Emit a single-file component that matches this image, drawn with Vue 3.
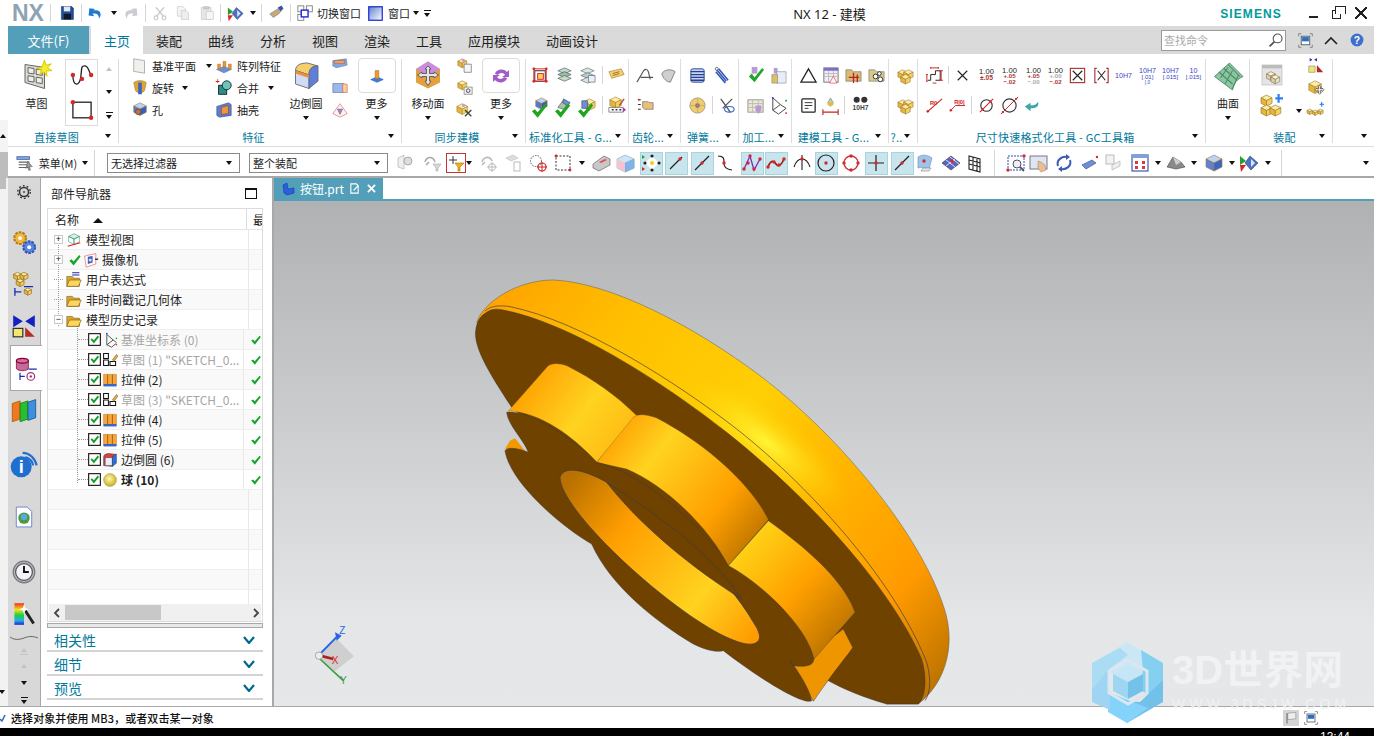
<script setup>
import { h } from 'vue'

const dot = (x, y, r = 1.7, c = '#d9262c') => `<circle cx="${x}" cy="${y}" r="${r}" fill="${c}"/>`
const ln = (d, c = '#222', w = 1) => `<path d="${d}" stroke="${c}" stroke-width="${w}" fill="none"/>`
const fl = (d, c, s = 'none') => `<path d="${d}" fill="${c}" stroke="${s}" stroke-width=".6"/>`
const tx = (x, y, t, c = '#333', s = 6, b = 'normal') => `<text x="${x}" y="${y}" fill="${c}" font-size="${s}" font-weight="${b}" text-anchor="middle" font-family="Liberation Sans, sans-serif">${t}</text>`
const cube = (x, y, s, t, l, r) =>
  fl(`M${x} ${y}l${s} ${s / 2}l${-s} ${s / 2}l${-s} ${-s / 2}z`, t, '#9a7a30') +
  fl(`M${x - s} ${y + s / 2}l${s} ${s / 2}v${s}l${-s} ${-s / 2}z`, l, '#9a7a30') +
  fl(`M${x + s} ${y + s / 2}l${-s} ${s / 2}v${s}l${s} ${-s / 2}z`, r, '#9a7a30')
const yc = (x, y, s) => cube(x, y, s, '#fdeba6', '#e8b43c', '#f6d05f')
const bc = (x, y, s) => cube(x, y, s, '#bcd3f5', '#4f78d8', '#3a5cc0')
const gc = (x, y, s) => cube(x, y, s, '#f2f2f2', '#cfcfcf', '#e0e0e0')
const check = (x = 0, y = 0, c = '#1fa51f') => `<path transform="translate(${x} ${y})" d="M2 11l3-2 3 3 8-9 2 2-10 13z" fill="${c}"/>`
const folder = fl('M2 6h6l2 2h6v9H2z', '#d9a62b', '#6b4a10') + fl('M2 17l3-7h13l-3 7z', '#ffd65c', '#6b4a10')

const icons = {
  save: fl('M3 2h13l2 2v14H3z', '#1d4f9e', '#123') + fl('M6 2h8v6H6z', '#dfe8f5') + fl('M6 11h9v7H6z', '#101828'),
  undo: fl('M3 4l7 1-2 2c4-1 9 0 9 5 0 2-1 4-2 5 0-5-3-7-8-6l2 3-7-1z', '#1f78d1'),
  redo: `<g transform="matrix(-1 0 0 1 20 0)">` + fl('M3 4l7 1-2 2c4-1 9 0 9 5 0 2-1 4-2 5 0-5-3-7-8-6l2 3-7-1z', '#c9ccd0') + `</g>`,
  cut: ln('M6 14L15 3M14 14L5 3', '#c4c6c8', 1.6) + `<circle cx="5" cy="16" r="2.4" fill="none" stroke="#c4c6c8" stroke-width="1.4"/><circle cx="15" cy="16" r="2.4" fill="none" stroke="#c4c6c8" stroke-width="1.4"/>`,
  copy: fl('M3 2h7l3 3v9H3z', '#f4f4f4', '#b8b8b8') + fl('M8 7h6l3 3v8H8z', '#eee', '#b8b8b8'),
  paste: fl('M3 3h12v15H3z', '#e6e6e6', '#b8b8b8') + fl('M6 2h6v3H6z', '#d0d0d0', '#aaa') + fl('M9 8h9v10H9z', '#f6f6f6', '#b8b8b8'),
  view: fl('M1 3l6 5-6 4z', '#25a02b') + fl('M1 12l6 0-5 7z', '#d8262c') + fl('M11 3l8 7-7 7-6-7z', '#4a70c8', '#345') + fl('M12 6l4 4-4 4z', '#dce6f7'),
  brush: fl('M3 11l8-5 5-4 2 3-5 6-6 4z', '#c8a878', '#777') + fl('M12 4l4-2 2 3-3 3z', '#2f55b5'),
  swin: `<rect x="1" y="1" width="7" height="7" fill="#fff" stroke="#777"/><rect x="11" y="1" width="7" height="7" fill="#fff" stroke="#777"/><rect x="1" y="11" width="7" height="7" fill="#fff" stroke="#777"/><rect x="5" y="6" width="8" height="8" fill="#fff" stroke="#1a22d8" stroke-width="1.6"/>`,
  win: `<defs><linearGradient id="wg" x1="0" y1="0" x2="1" y2="1"><stop offset="0" stop-color="#5b85c8"/><stop offset="1" stop-color="#fff"/></linearGradient></defs><rect x="1" y="1" width="18" height="18" fill="url(#wg)" stroke="#1a22d8" stroke-width="1.6"/>`,
  lens: `<circle cx="12" cy="8" r="5.5" fill="#fff" stroke="#555" stroke-width="1.4"/>` + ln('M8 12l-6 6', '#555', 2.4),
  fullscr: ln('M2 5V2h3M15 2h3v3M18 15v3h-3M5 18H2v-3', '#777') + `<rect x="5" y="5" width="10" height="10" fill="#fff" stroke="#456"/><rect x="6" y="6" width="8" height="5" fill="#2f6fc0"/>`,
  help: `<circle cx="10" cy="10" r="8" fill="#3c6fd0"/>` + tx(10, 14.5, '?', '#fff', 13, 'bold'),
  sketch: fl('M2 3l13 2v14L2 15z', '#dcdcd4', '#555') + fl('M4 5l4 .7v3.6l-4-.6zM9.5 6l4 .6v3.6l-4-.6zM4 10.5l4 .6v3.6l-4-.6zM9.5 11.5l4 .6v3.6l-4-.6z', '#efefe8', '#555') + fl('M15 0l1 3.5 3.5-1-2.5 2.8 3 1.8-3.6.2.2 3.6-2-3-3 2 1.5-3.4-3.5-1 3.6-.6z', '#f5ec2a', '#d6c400'),
  curve: ln('M3 10c0 9 5 9 6 2s0-9 3-9 3 4 5 7', '#222', 1) + dot(3, 10) + dot(10, 13) + dot(17, 10),
  rect: `<rect x="3" y="4" width="14" height="12" fill="none" stroke="#222"/>` + dot(3, 4) + dot(17, 16),
  plane: fl('M3 2l12 2v14L3 16z', '#eff2ec', '#777'),
  revolve: fl('M3 4c4-3 10-3 14 0l-2 9c-2 3-8 3-10 0z', '#e5a22c', '#785') + fl('M8 4h4v13H8z', '#3b64c8'),
  hole: bc(10, 2, 7) + `<circle cx="8" cy="12" r="3" fill="#d96a30" stroke="#555"/>`,
  pattern: fl('M1 14l9-4 9 4-9 4z', '#6f8ed0') + fl('M3 8h3v5H3zM9 5h3v6H9zM15 8h3v5h-3z', '#f09a2a', '#a5621a'),
  unite: `<rect x="4" y="7" width="9" height="10" fill="#2e8f80" stroke="#123"/><circle cx="13" cy="7" r="5" fill="#6fc4b8" stroke="#123"/>` + tx(3, 6, '+', '#d22', 8, 'bold'),
  shell: fl('M2 6l13-4 3 2v12l-13 2-3-2z', '#5e7fd0', '#345') + fl('M7 7l8-2v9l-8 1z', '#f0953a', '#734'),
  blend: fl('M3 7c0-4 4-5 8-5l7 2c-4 0-6 2-6 6z', '#f4cf6a', '#667') + fl('M3 7l9 3v9l-9-3z', '#cfdcf4', '#667') + fl('M12 10c0-4 2-6 6-6v10l-6 5z', '#5f7fd8', '#667') + fl('M3 7l9 3v2L3 9z', '#ee8d3a'),
  bl1: fl('M2 4l15-2 1 7-12 3-4-2z', '#7fa5e8', '#678') + fl('M4 4h11v3H4z', '#f2a75a', '#b53'),
  bl2: fl('M2 5h12v10H2z', '#9ab8ec', '#567') + fl('M13 5l5 1v9h-5z', '#f7d09a', '#b53') ,
  bl3: fl('M10 3l8 11-8 4-8-4z', '#f5f5f5', '#d44') + fl('M7 9h6l-3 6z', '#6f98e8', '#d44'),
  more1: fl('M3 14l7-3 7 3-7 3z', '#3a7ce0', '#25a') + fl('M8 4h4v9H8z', '#f09a2a', '#a5621a'),
  move: fl('M10 1l8 5v9l-8 4-8-4V6z', '#e5a03c') + fl('M10 1l8 5-8 5-8-5z', '#c98de0') + fl('M10 4l2 2h-1v3h3v-1l3 2-3 2v-1h-3v3h1l-2 3-2-3h1v-3H6v1l-3-2 3-2v1h3V6H8z', '#e6e6e6', '#555'),
  syn1: yc(7, 2, 5) + fl('M9 8h8v9H9z', '#f6f6f6', '#444') + fl('M7 2l4 2-4 2z', '#c98de0'),
  syn2: yc(7, 2, 5) + fl('M9 9h9v8H9z', '#f0f0f0', '#555') + `<circle cx="13.5" cy="13" r="2" fill="none" stroke="#444"/>`,
  syn3: yc(7, 3, 6) + ln('M10 10l7 7M17 10l-7 7', '#444', 1.6) + fl('M7 3l5 2-5 2z', '#c98de0'),
  sync: fl('M4 8c1-5 9-6 12-2l2-2v7h-7l3-2c-2-3-6-2-7 0z', '#a15cc8') + fl('M16 12c-1 5-9 6-12 2l-2 2V9h7l-3 2c2 3 6 2 7 0z', '#a15cc8'),
  s1: `<rect x="4" y="5" width="11" height="11" fill="none" stroke="#222"/><rect x="7" y="8" width="6" height="6" fill="#fbd060" stroke="#d22"/>` + `<rect x="3" y="3" width="13" height="13" fill="none" stroke="#d22"/>` + dot(3, 3, 1.5) + dot(16, 3, 1.5) + dot(3, 16, 1.5) + dot(16, 16, 1.5),
  s2: fl('M3 5l7-3 7 3-7 3z', '#c9d8c9', '#345') + fl('M3 9l7-3 7 3-7 3z', '#9cc09c', '#345') + fl('M3 13l7-3 7 3-7 3z', '#c9d8c9', '#345'),
  s3: fl('M3 5l7-3 7 3-7 3z', '#dde6dd', '#456') + fl('M3 10l7-3 7 3-7 3z', '#b9ccc0', '#456') + fl('M3 15l7-3 7 3-7 3z', '#dde6dd', '#456') + fl('M11 10h7v7h-7z', '#e8eef8', '#456'),
  s4: fl('M2 6l13-3 3 6-13 4z', '#f4cf70', '#a07020') + ln('M6 8l7-2M6 10l7-2', '#a07020'),
  s5: bc(11, 2, 6) + check(-1, 5),
  s6: fl('M3 12l6-8 5 3-5 7z', '#a8c4a4', '#345') + fl('M9 3l7 4-3 3-5-3z', '#6f8ed8', '#345') + check(-2, 5),
  s7: yc(12, 3, 6) + fl('M4 5h6v8H4z', '#6f8ed8', '#345') + check(-2, 5),
  s8: yc(9, 1, 6) + fl('M2 12h15v5H2z', '#fff', '#333') + ln('M5 14.5h2M9 14.5h2M13 14.5h2', '#333', 1.6) + fl('M17 12l3 2.5-3 2.5z', '#a030c0') + ln('M13 10l5-7', '#b53', 1.6),
  g1: ln('M1 17L8 5c2-2 4-2 5 1l2 8M5 12h13', '#555', 1.2),
  g2: fl('M3 8c3-5 10-5 14-2l-5 11c-4 0-8-4-9-9z', '#cfcfcf', '#444'),
  g3: ln('M2 4h3M2 9h3M2 14h3', '#333', 1.2) + fl('M7 6h6l1 1h4v7h-9l-2-2z', '#e8c07a', '#555') + dot(3, 4, 1),
  sp1: `<rect x="3" y="3" width="14" height="14" rx="2" fill="#cbd7ee" stroke="#26409a"/>` + ln('M3 6h14M3 9h14M3 12h14M3 15h14', '#26409a', 1.4),
  sp2: ln('M5 4l10 12M7 3l10 12M4 6l10 12', '#2f55b5', 1.6) + `<circle cx="5" cy="3" r="1.6" fill="none" stroke="#777"/>`,
  sp3: `<ellipse cx="10" cy="10" rx="8" ry="8" fill="#f1cc6a" stroke="#a97"/><circle cx="10" cy="10" r="2.5" fill="#777"/>` + ln('M10 3v14M3 10h14', '#a97', .6),
  sp4: ln('M4 3l10 14M16 3L6 13', '#555', 1.4) + `<ellipse cx="13" cy="14" rx="5" ry="3" fill="none" stroke="#3b64c8" stroke-width="1.2"/>`,
  m1: fl('M6 1h6v7H6z', '#b59ad4') + fl('M3 11l3-3 3 4 8-10 2 2-10 13z', '#21a62b'),
  m2: fl('M5 2h4v6H5z', '#b59ad4') + fl('M8 6h10v12H8z', '#e8eef8', '#789') + fl('M3 9h6v9H3z', '#e0c05a', '#789'),
  m3: `<rect x="2" y="4" width="16" height="13" fill="#eee8d0" stroke="#999"/>` + ln('M2 8h16M2 12h16M7 4v13M13 4v13', '#bbb') + fl('M10 10h6v5l-3 4-3-4z', '#b59ad4'),
  m4: ln('M4 2v13l6 4 8-6M4 15l8-6 6 4M4 2l8 7', '#444') + dot(4, 2, 1, '#2040c0') + dot(18, 5, 1, '#20a020') + dot(18, 18, 1, '#d22'),
  t1: ln('M10 3l8 14H2z', '#222', 1.3),
  t2: `<rect x="3" y="2" width="15" height="15" fill="#f2eef8" stroke="#777"/><rect x="3" y="2" width="15" height="3" fill="#7d6fc8"/>` + ln('M3 8h15M3 11h15M8 5v12M13 5v12', '#bbb') + fl('M13 11l4 7H9z', '#fff', '#d22'),
  t3: fl('M2 4h6l2 2h8v10H2z', '#d8bc74', '#666') + ln('M10 7v11M5 12h11M14 9v8', '#b22', 1.4),
  t4: fl('M2 4h6l2 2h8v10H2z', '#d8c88a', '#666') + `<circle cx="9" cy="11" r="2.5" fill="#fff" stroke="#333"/><circle cx="14" cy="14" r="2.5" fill="#fff" stroke="#333"/><circle cx="13" cy="8" r="2" fill="#fff" stroke="#333"/>`,
  t5: `<rect x="3" y="3" width="14" height="14" rx="1" fill="#fff" stroke="#222" stroke-width="1.3"/>` + ln('M6 7h8M6 10h8M6 13h4', '#333'),
  t6: fl('M10 2l3 5-3 4-3-4z', '#c8c8a0', '#777') + fl('M7 7h6v3H7z', '#e8b83c') + ln('M2 17h16M2 14v6M18 14v6', '#c22', 1.2),
  t7: `<circle cx="6" cy="4" r="3.2" fill="#333"/><circle cx="14" cy="4" r="3.2" fill="#333"/>` + tx(10, 15, '10H7', '#444', 7, 'bold'),
  as: yc(7, 4, 5) + yc(13, 4, 5) + yc(10, 9, 5),
  d1: ln('M3 15h3V9h5V5h5v10h-5', '#222') + ln('M2 9v7M1 9h2M1 16h2M17 5v10M15 5h4M15 15h4M6 2h8M6 1v2M14 1v2M8 18h4', '#c22', 1),
  dx: ln('M5 5l10 10M15 5L5 15', '#222', 1.2),
  d100: tx(10, 8, '1.00', '#222', 8) + tx(10, 15, '±.05', '#a33', 7, 'bold'),
  d101: tx(10, 7, '1.00', '#222', 8) + tx(10, 13, '+.05', '#a33', 6.5, 'bold') + tx(10, 19, '−.02', '#a33', 6.5, 'bold'),
  d102: tx(10, 7, '1.00', '#222', 8) + tx(10, 13, '+.05', '#a33', 6.5, 'bold') + tx(10, 19, '−.00', '#aaa', 6.5, 'bold'),
  d103: tx(10, 7, '1.00', '#222', 8) + tx(10, 13, '+.00', '#aaa', 6.5, 'bold') + tx(10, 19, '−.02', '#a33', 6.5, 'bold'),
  dbox: `<rect x="2.5" y="2.5" width="15" height="15" fill="#fff" stroke="#a33" stroke-width="1.2"/>` + ln('M5 5l10 10M15 5L5 15', '#222', 1.2),
  dpar: ln('M5 2.5H3v15h2M15 2.5h2v15h-2', '#a33', 1.2) + ln('M6 5l8 10M14 5L6 15', '#222', 1.1),
  h1: tx(10, 13, '10H7', '#3a44c8', 7.5),
  h2: tx(10, 7, '10H7', '#3a44c8', 7.5) + tx(10, 14, '[.01]', '#3a44c8', 6.5) + tx(10, 19, '[.0', '#3a44c8', 5),
  h3: tx(10, 7, '10H7', '#3a44c8', 7.5) + tx(10, 14, '[.015]', '#3a44c8', 6.5),
  h4: tx(10, 7, '10', '#3a44c8', 7.5) + tx(10, 14, '[.015]', '#3a44c8', 6.5),
  r1: ln('M2 17L18 3', '#c22', 1.2) + tx(9, 9, 'R0', '#c22', 6, 'bold') + dot(3, 16, 1.3),
  r2: ln('M2 16l6-6h10', '#c22', 1) + tx(12, 8, 'R|0|', '#c22', 6, 'bold') + dot(3, 15, 1.3),
  r3: `<circle cx="10" cy="10" r="6" fill="none" stroke="#333" stroke-width="1.2"/>` + ln('M3 17L17 3', '#c22', 1.1) + dot(6, 14, 1.2) + dot(14, 6, 1.2),
  r4: `<circle cx="10" cy="10" r="7" fill="none" stroke="#333" stroke-width="1.2"/>` + ln('M1 19L19 1', '#c22', 1) + dot(3, 17, 1.2) + dot(17, 3, 1.2),
  r5: fl('M17 6c1 5-2 7-8 7v3l-6-5 6-4v3c4 0 6-1 8-4z', '#3fa6a8'),
  surf: fl('M1 11L11 2l9 9c-4 2-6 4-7 9z', '#8ac7a0', '#4c8a6a') + ln('M4 8l9 8M7 5.5l9 8M10 3l8 8M8 16l5-9M5 12l5-7M13 19l4-9', '#4c8a6a', .7),
  gasm: `<rect x="1" y="1" width="18" height="18" fill="#e4e4e4" stroke="#ccc"/><rect x="1" y="1" width="18" height="3" fill="#bbb"/>` + gc(9, 7, 4) + gc(13, 10, 4),
  amir: fl('M3 1l3 2-3 2zM11 1L8 3l3 2z', '#1a28b8') + fl('M2 10h7v7H2z', '#f1e66e', '#776') + fl('M11 17V9l7 8z', '#b62a2a'),
  amov: yc(9, 2, 7) + fl('M14 7l2 2h-1v2h2v-1l2 2-2 2v-1h-2v2h1l-2 2-2-2h1v-2h-2v1l-2-2 2-2v1h2V9h-1z', '#f4f4f4', '#222'),
  aadd: yc(5, 1, 5) + yc(5, 10, 5) + yc(13, 10, 5) + fl('M13 3h2V0h2v3h3v2h-3v3h-2V5h-2z', '#2f80f0'),
  achain: yc(3, 9, 3) + yc(9, 10, 3) + yc(15, 9, 3) + fl('M14 3h1.5V1h1.5v2h2v1.5h-2v2h-1.5v-2H14z', '#3d8bf0'),
  menu: `<rect x="1" y="3" width="14" height="3" fill="#8fa6d8" stroke="#4d6db0"/>` + ln('M3 9h12M3 12h12M3 15h12', '#666', 1.2) + fl('M13 8l5 6-3 0 1 4-2 0-1-4-2 2z', '#999', '#555'),
  f1: fl('M3 5l6-3v14l-6-2z', '#eee', '#aaa') + `<circle cx="13" cy="8" r="4" fill="#ddd" stroke="#aaa"/>`,
  f2: ln('M2 9c2-6 8-6 10 0M6 9l-3 3', '#aaa', 1.6) + fl('M10 11h8l-3 4v3h-2v-3z', '#d8d8d8', '#aaa'),
  f3: `<rect x="0.5" y="0.5" width="19" height="19" fill="#fff" stroke="#c33"/>` + ln('M3 7h8M7 3v8', '#333', 1) + fl('M9 10h9l-4 4v4h-2v-4z', '#f0b020', '#a70'),
  f4: ln('M3 9c2-6 8-6 10-1M6 9L3 12', '#bbb', 1.6) + `<circle cx="13" cy="14" r="3.5" fill="none" stroke="#bbb"/>` + ln('M13 9v10M8 14h10', '#bbb'),
  f5: fl('M3 5l7-3 5 3-7 3z', '#ddd', '#bbb') + `<rect x="11" y="9" width="6" height="9" fill="none" stroke="#bbb"/>`,
  f6: `<circle cx="8" cy="8" r="5.5" fill="none" stroke="#555" stroke-dasharray="1.5 1.2"/>` + `<circle cx="14" cy="14" r="4" fill="none" stroke="#c22" stroke-width="1.2"/>` + ln('M14 9v10M9 14h10', '#c22'),
  f7: `<rect x="3" y="3" width="14" height="14" fill="none" stroke="#333" stroke-dasharray="2 1.5"/>` + dot(3, 3, 1.4) + dot(17, 17, 1.4),
  f8: fl('M2 11L13 3l6 3v6L8 18 2 15z', '#c8c8c8', '#555') + fl('M8 9l6-3 2 1-6 3z', '#e05050'),
  f9: fl('M2 6l8-4 9 4v9l-9 4-8-4z', '#cfe3fa', '#7aa') + fl('M10 10l9-4v9l-9 4z', '#7fb3ee', '#7aa') + fl('M2 6l8 4v9l-8-4z', '#f4c4d0'),
  p1: fl('M3 10l7-7 7 7-7 7z', '#fff') + dot(10, 3, 1.6, '#222') + dot(10, 17, 1.6, '#222') + dot(3, 10, 1.6, '#222') + dot(17, 10, 1.6, '#222') + dot(10, 10, 2, '#f5d010') + fl('M0 2l3 2-3 2z', '#1fa51f') + fl('M0 14l3 2-3 2z', '#d22'),
  p2: ln('M4 16L16 4', '#222', 1.2) + dot(14, 6),
  p3: ln('M3 17L17 3', '#222', 1.2) + dot(10, 10),
  p4: ln('M3 3c6 0 6 3 6 6s0 7 8 8', '#222', 1.2) + dot(9, 10),
  p5: ln('M2 16L8 3l4 14 6-11', '#7a28c8', 1.3) + dot(2, 16) + dot(8, 3) + dot(12, 16) + dot(18, 6) + dot(6, 10),
  p6: ln('M2 14c3-8 6-6 8-3s5 2 8-5', '#a01818', 1.6) + dot(2, 14) + dot(8, 9) + dot(13, 12) + dot(18, 6),
  p7: ln('M2 14c2-6 5-8 8-8s6 2 8 8M10 2v15', '#222', 1.1) + dot(10, 6),
  p8: `<circle cx="10" cy="10" r="8" fill="none" stroke="#222" stroke-width="1.2"/>` + dot(10, 10),
  p9: `<circle cx="10" cy="10" r="7" fill="none" stroke="#c33" stroke-width="1.3"/>` + dot(10, 3) + dot(10, 17) + dot(3, 10) + dot(17, 10),
  p10: ln('M10 2v16M2 10h16', '#222', 1.2) + dot(10, 10),
  p11: ln('M3 17L17 3', '#222', 1.2) + dot(10, 10),
  p12: fl('M3 4c5-3 10-2 14 1l-3 11c-4-2-8-2-11-1z', '#9cc4ee', '#789') + dot(9, 8) + fl('M8 15h8l-2 3H6z', '#e6e6e6', '#789'),
  p13: fl('M1 10l9-7 9 7-9 7z', '#5866c0', '#334') + ln('M5 7l9 7M9 4l9 7M5 13l9-7', '#dde') + dot(11, 8),
  p14: ln('M4 3l11 3v13L4 16zM4 7l11 3M4 11l11 3M8 4v13M12 5v13', '#222', 1.1),
  v1: `<rect x="2" y="3" width="16" height="14" fill="none" stroke="#234ec0" stroke-dasharray="2 1"/><circle cx="11" cy="11" r="4" fill="#eef" stroke="#555"/>` + ln('M14 14l4 4', '#555', 1.8) + dot(2, 17) + dot(18, 3),
  v2: `<rect x="1" y="3" width="17" height="13" fill="#dfe6f2" stroke="#778"/>` + fl('M9 8l3 1 4 3 1 5-5 2-3-4z', '#e8c090', '#a87'),
  v3: ln('M4 13C2 7 8 3 13 4M16 7c2 6-4 10-9 9', '#3b5cb8', 2) + fl('M12 1l4 3-4 3zM8 13l-4 3 4 3z', '#3b5cb8'),
  v4: fl('M2 12l10-5 4 3-10 6z', '#6a8ee0', '#446') + dot(17, 4, 1.2),
  v5: `<rect x="3" y="2" width="8" height="9" fill="#f2f2f2" stroke="#bbb"/>` + fl('M9 12l8-4v5l-8 4z', '#eee', '#aaa'),
  v6: `<rect x="2" y="2" width="16" height="16" fill="#fff" stroke="#3a5cb0" stroke-width="1.2"/><rect x="2" y="2" width="16" height="3" fill="#7fa0dc"/>` + fl('M5 8h3v3H5zM12 8h3v3h-3zM5 13h3v3H5zM12 13h3v3h-3z', '#d83a3a'),
  v7: fl('M1 14l6-10 8 5 4 5-9 2z', '#8a8a8a', '#444') + fl('M7 4l8 5-5 3z', '#cfcfcf'),
  v8: cube(10, 2, 8, '#bcd3f5', '#5b82d8', '#3f65c4'),
  flag: `<rect x="0" y="0" width="20" height="20" fill="#d4d4d4"/>` + fl('M6 4l10 -1v8L6 12z', '#eee', '#777') + ln('M5 4v13', '#666', 1.2),
  gear: `<circle cx="10" cy="10" r="5" fill="none" stroke="#333" stroke-width="1.7"/><circle cx="10" cy="10" r="7" fill="none" stroke="#333" stroke-width="1.5" stroke-dasharray="2 2.4"/><circle cx="10" cy="10" r="1.4" fill="#777"/>`,
  gears: `<circle cx="7" cy="7" r="4.5" fill="#f2b83c" stroke="#b57b14" stroke-width="1.6" stroke-dasharray="2 .8"/><circle cx="7" cy="7" r="1.5" fill="#fff"/><circle cx="14" cy="14" r="4.5" fill="#5b85dc" stroke="#2f55b5" stroke-width="1.6" stroke-dasharray="2 .8"/><circle cx="14" cy="14" r="1.5" fill="#fff"/>`,
  atree: yc(5, 1, 3) + yc(10, 1, 3) + yc(7, 6, 3) + ln('M3 13v6M3 16h5M10 12h7', '#1a28b8', 1) + yc(13, 13, 2.8),
  rail3: fl('M1 1l8 5-8 5zM19 1l-8 5 8 5z', '#1420c0') + `<rect x="1" y="12" width="8" height="7" fill="#f1e66e" stroke="#333"/>` + fl('M11 19v-8l8 8z', '#b62a2a'),
  pnav: `<ellipse cx="7" cy="4" rx="5" ry="2" fill="#d06fb0" stroke="#802"/>` + fl('M2 4v6c0 3 10 3 10 0V4c0 3-10 3-10 0z', '#c66a9e', '#802') + ln('M5 14v6M5 17h4M12 11h7', '#1a28b8') + `<circle cx="14" cy="17" r="3.2" fill="none" stroke="#a0307a"/><circle cx="14" cy="17" r="1" fill="#a0307a"/>`,
  books: fl('M1 5l6-2v14l-6 2z', '#f07820', '#a50') + fl('M7 5l6-2v14l-6 2z', '#28c028', '#172') + fl('M13 4l6-2v14l-6 2z', '#3f8fe0', '#157'),
  info: `<circle cx="8" cy="12" r="7.5" fill="#1f6fd0"/>` + tx(8, 16.5, 'i', '#fff', 13, 'bold') + ln('M9 2c5 0 9 4 10 9', '#1f6fd0', 1.6) + ln('M11 5c3 1 5 3 5.5 6', '#1f6fd0', 1.6),
  doc: fl('M3 1h10l4 4v14H3z', '#fff', '#2f55c5') + `<circle cx="10" cy="11" r="5.2" fill="#4d9a3a"/><circle cx="10" cy="10" r="3" fill="#5aa8e0"/>`,
  clock: `<circle cx="10" cy="10" r="9" fill="#b0b8c8" stroke="#777"/><circle cx="10" cy="10" r="7" fill="#f4f4f8" stroke="#555"/>` + ln('M10 5v5h4', '#111', 1.6),
  color: `<defs><linearGradient id="cg" x1="0" y1="0" x2="0" y2="1"><stop offset="0" stop-color="#f03020"/><stop offset=".3" stop-color="#f5e020"/><stop offset=".55" stop-color="#20d040"/><stop offset=".8" stop-color="#20b0e0"/><stop offset="1" stop-color="#2020e0"/></linearGradient></defs><rect x="2" y="1" width="8" height="18" fill="url(#cg)"/>` + ln('M11 7l7 11', '#222', 2.4) + fl('M10 2l1 3 3 1-3 1-1 3-1-3-3-1 3-1z', '#fff'),
  view3: cube(10, 3, 6, '#d8efe6', 'none', 'none').replace(/#9a7a30/g, '#1a8f60') + ln('M3 17L17 13', '#d22', 1.3),
  cam: fl('M2 5l14-3v13L4 19z', '#fff', '#d22') + fl('M6 6l6-1v8l-6 2z', '#3b5cc0') + `<circle cx="9" cy="10" r="2" fill="#ddd"/>` + ln('M15 9h4', '#222', 1.6),
  fold: folder,
  foldl: folder + ln('M8 2h8M8 4.5h8', '#22249c', 1.2),
  csys: ln('M6 3v13l6 3 6-5M6 16l8-6 4 3M6 3l8 7', '#333', 1) + dot(6, 2, 1, '#1a28c8') + dot(18, 8, 1, '#1fa51f') + dot(18, 16, 1, '#d22'),
  skt: ln('M2 2h6v6H2zM2 10h6v7H2zM10 12h7v5h-7z', '#111', 1.3) + fl('M13 10l5-7 2 2-5 7z', '#f1a52c', '#555'),
  ext: fl('M2 3h16v14H2z', '#f2a83a', '#b26a10') + ln('M7 3v14M13 3v14', '#c35a10', 1.3) + fl('M2 15h16v3H2z', '#3566c8'),
  blendT: fl('M2 7c0-4 3-5 7-5l9 1c-3 1-5 3-5 7v8L2 17z', '#e43b3b', '#234') + fl('M4 7h9v10H4z', '#e8eefa', '#234') + fl('M13 8c0-3 2-4 5-5v11l-5 4z', '#2f6fdc', '#234'),
  sphere: `<defs><radialGradient id="sg" cx=".45" cy=".4" r=".6"><stop offset="0" stop-color="#fff7b0"/><stop offset="1" stop-color="#c9b021"/></radialGradient></defs><circle cx="10" cy="10" r="8" fill="url(#sg)" stroke="#8f8a50" stroke-width=".6"/>`,
  okbox: `<rect x="1" y="1" width="18" height="18" fill="#fff" stroke="#111" stroke-width="1.7"/>` + fl('M4 10l2-2 3 3 6-7 2 2-8 10z', '#14a02a'),
  ok: check(0, 0, '#18a52a')
}

const Ic = (p) => h('svg', { class: 'ic', viewBox: '0 0 20 20', width: p.s || 20, height: p.s || 20, innerHTML: icons[p.n] })
Ic.props = ['n', 's']

// Turn page-centre positions into flow items: each one's left margin is what separates it from the previous one.
const place = (list, left = 0) => {
  let end = left
  return list.map((it) => {
    const w = it.w ?? (it.car ? 6 : it.sep ? 1 : 20)
    const ml = it.x - w / 2 - end
    end = it.x + w / 2
    return { ...it, w, ml }
  })
}

const titleItems = place([
  { sep: 1, x: 50 }, { i: 'save', x: 67, w: 16 }, { sep: 1, x: 81 }, { i: 'undo', x: 95, w: 16 }, { car: 1, x: 114 }, { i: 'redo', x: 131, w: 16 },
  { sep: 1, x: 145 }, { i: 'cut', x: 160, w: 16 }, { i: 'copy', x: 183, w: 16 }, { i: 'paste', x: 207, w: 16 }, { sep: 1, x: 220 },
  { i: 'view', x: 235, w: 17 }, { car: 1, x: 253 }, { sep: 1, x: 261 }, { i: 'brush', x: 276, w: 18 }, { sep: 1, x: 290 },
  { i: 'swin', x: 305, w: 17 }, { t: '切换窗口', x: 339, w: 46, cls: 'qt' }, { i: 'win', x: 375, w: 15 }, { t: '窗口', x: 399, w: 24, cls: 'qt' },
  { car: 1, x: 416 }, { lines: 1, x: 427, w: 7 },
  { t: 'NX 12 - 建模', x: 829.5, w: 90, cls: 'apptitle' }, { t: 'SIEMENS', x: 1251, w: 70, cls: 'siemens' },
  { x: 1313, w: 10, win: 'min' }, { x: 1337, w: 13, win: 'res' }, { x: 1361, w: 12, win: 'close' }
], 44)

const tabs = [
  { t: '主页', w: 52, on: true }, { t: '装配', w: 52 }, { t: '曲线', w: 52 }, { t: '分析', w: 52 }, { t: '视图', w: 52 },
  { t: '渲染', w: 52 }, { t: '工具', w: 52 }, { t: '应用模块', w: 78 }, { t: '动画设计', w: 78 }
]

const rowGroups = [
  { w: 103, left: 526, label: '标准化工具 - G...', rows: [
    [['s1', 540], ['s2', 564], ['s3', 587], ['|', 602], ['s4', 616]],
    [['s5', 540], ['s6', 564], ['s7', 587], ['|', 602], ['s8', 616]]] },
  { w: 52, left: 629, label: '齿轮...', rows: [[['g1', 645], ['g2', 668]], [['g3', 645]]] },
  { w: 58, left: 681, label: '弹簧...', rows: [[['sp1', 697], ['sp2', 721]], [['sp3', 697], ['|', 712], ['sp4', 726]]] },
  { w: 53, left: 739, label: '加工...', rows: [[['m1', 755], ['m2', 778]], [['m3', 755], ['m4', 778]]] },
  { w: 97, left: 792, label: '建模工具 - G...', rows: [[['t1', 808], ['t2', 830], ['t3', 853], ['t4', 876]], [['t5', 808], ['t6', 830], ['|', 844], ['t7', 860]]] },
  { w: 29, left: 889, label: '?..', rows: [[['as', 905]], [['as', 905]]] },
  { w: 288, left: 918, label: '尺寸快速格式化工具 - GC工具箱', rows: [
    [['d1', 934], ['|', 948], ['dx', 962], ['d100', 986], ['d101', 1009], ['d102', 1033], ['d103', 1055], ['dbox', 1077], ['dpar', 1101], ['h1', 1123], ['h2', 1147], ['h3', 1170], ['h4', 1193]],
    [['r1', 934], ['r2', 957], ['|', 971], ['r3', 986], ['r4', 1009], ['r5', 1031]]] }
].map((g) => ({
  ...g,
  rows: g.rows.map((r) => place(r.map(([i, x]) => (i === '|' ? { sep: 1, x } : { i, x, w: 19 })), g.left))
}))

const toolItems = place([
  { i: 'menu', x: 25, w: 18 }, { t: '菜单(M)', x: 58, w: 42, cls: 'menut' }, { car: 1, x: 85 }, { sep: 1, x: 94 },
  { combo: '无选择过滤器', x: 173.5, w: 133 }, { combo: '整个装配', x: 318.5, w: 139 },
  { i: 'f1', x: 405 }, { i: 'f2', x: 433 }, { i: 'f3', x: 456 }, { car: 1, x: 469 }, { i: 'f4', x: 489 }, { i: 'f5', x: 513 }, { i: 'f6', x: 538 }, { i: 'f7', x: 563 },
  { car: 1, x: 582 }, { i: 'f8', x: 601 }, { i: 'f9', x: 625 },
  { i: 'p1', x: 651.5, on: 1, w: 23 }, { i: 'p2', x: 676, on: 1, w: 23 }, { i: 'p3', x: 702, on: 1, w: 23 }, { i: 'p4', x: 725 }, { i: 'p5', x: 752, on: 1, w: 23 }, { i: 'p6', x: 776, on: 1, w: 23 }, { i: 'p7', x: 802 },
  { i: 'p8', x: 826, on: 1, w: 23 }, { i: 'p9', x: 851 }, { i: 'p10', x: 876, on: 1, w: 23 }, { i: 'p11', x: 902, on: 1, w: 23 }, { i: 'p12', x: 925 }, { i: 'p13', x: 951 }, { i: 'p14', x: 975 },
  { sep: 1, x: 994 }, { i: 'v1', x: 1016 }, { i: 'v2', x: 1039 }, { i: 'v3', x: 1064 }, { i: 'v4', x: 1090 }, { i: 'v5', x: 1113 }, { i: 'v6', x: 1140 }, { car: 1, x: 1158 },
  { i: 'v7', x: 1176 }, { car: 1, x: 1194 }, { i: 'v8', x: 1214 }, { car: 1, x: 1232 }, { i: 'view', x: 1249 }, { car: 1, x: 1268 }, { sep: 1, x: 1281 }, { car: 1, x: 1366 }
], 0)

const railItems = (() => {
  const list = [['gear', 193, 18], ['gears', 243, 26], ['atree', 285, 26], ['rail3', 327, 24], ['pnav', 369, 24], ['books', 411, 26], ['info', 465, 28], ['doc', 518, 22], ['clock', 573, 24], ['color', 615, 24]]
  let end = 180
  return list.map(([n, y, s]) => { const mt = y - s / 2 - end; end = y + s / 2; return { n, s, mt } })
})()

const tree = [
  { lv: 0, exp: '+', i: 'view3', t: '模型视图' },
  { lv: 0, exp: '+', ok: 1, i: 'cam', t: '摄像机' },
  { lv: 0, i: 'foldl', t: '用户表达式' },
  { lv: 0, i: 'fold', t: '非时间戳记几何体' },
  { lv: 0, exp: '−', i: 'fold', t: '模型历史记录' },
  { lv: 1, i: 'csys', t: '基准坐标系 (0)', dim: 1 },
  { lv: 1, i: 'skt', t: '草图 (1) "SKETCH_0...', dim: 1 },
  { lv: 1, i: 'ext', t: '拉伸 (2)' },
  { lv: 1, i: 'skt', t: '草图 (3) "SKETCH_0...', dim: 1 },
  { lv: 1, i: 'ext', t: '拉伸 (4)' },
  { lv: 1, i: 'ext', t: '拉伸 (5)' },
  { lv: 1, i: 'blendT', t: '边倒圆 (6)' },
  { lv: 1, i: 'sphere', t: '球 (10)', bold: 1 },
  {}, {}, {}, {}, {}, {}
]
const sections = ['相关性', '细节', '预览']
const statusText = '选择对象并使用 MB3\uFF0C或者双击某一对象'
</script>

<template>
  <div class="app">
    <!-- title bar -->
    <header class="titlebar">
      <span class="nx">NX</span>
      <span v-for="(it, n) in titleItems" :key="n" class="slot" :class="it.cls" :style="{ marginLeft: it.ml + 'px', width: it.w + 'px' }">
        <i v-if="it.car" class="car"></i>
        <i v-else-if="it.sep" class="vsep"></i>
        <i v-else-if="it.lines" class="carlines"></i>
        <i v-else-if="it.win" class="wbtn" :class="it.win"></i>
        <template v-else-if="it.t">{{ it.t }}</template>
        <Ic v-else :n="it.i" :s="it.w" />
      </span>
    </header>

    <!-- tabs -->
    <nav class="tabbar">
      <div class="filetab">文件(F)</div>
      <div v-for="t in tabs" :key="t.t" class="tab" :class="[{ on: t.on }, t.w === 78 ? 'wide' : '']">{{ t.t }}</div>
      <div class="tabright">
        <div class="search"><span>查找命令</span><Ic n="lens" :s="16" /></div>
        <Ic n="fullscr" :s="17" />
        <svg class="chev" viewBox="0 0 14 9" width="14" height="9"><path d="M1 8l6-6 6 6" fill="none" stroke="#222" stroke-width="1.6" /></svg>
        <Ic n="help" :s="16" />
      </div>
    </nav>

    <!-- ribbon -->
    <div class="ribbon">
      <section class="group g1">
        <div class="gbody flexrow">
          <div class="big c58"><Ic n="sketch" :s="32" /><span>草图</span></div>
          <div class="curvebox"><Ic n="curve" :s="26" /><Ic n="rect" :s="26" /></div>
          <div class="scroller"><i class="car up off"></i><i class="car"></i><i class="carlines"></i></div>
        </div>
        <div class="gfoot"><span>直接草图</span><i class="car"></i></div>
      </section>

      <section class="group g2">
        <div class="gbody flexrow">
          <div class="col3 c88">
            <div class="cmd"><Ic n="plane" :s="18" /><span>基准平面</span><i class="car ml"></i></div>
            <div class="cmd"><Ic n="revolve" :s="18" /><span>旋转</span><i class="car ml2"></i></div>
            <div class="cmd"><Ic n="hole" :s="18" /><span>孔</span></div>
          </div>
          <div class="col3 c70">
            <div class="cmd"><Ic n="pattern" :s="18" /><span>阵列特征</span></div>
            <div class="cmd"><Ic n="unite" :s="18" /><span>合并</span><i class="car ml2"></i></div>
            <div class="cmd"><Ic n="shell" :s="18" /><span>抽壳</span></div>
          </div>
          <div class="big c46"><Ic n="blend" :s="32" /><span>边倒圆</span><i class="car"></i></div>
          <div class="col3 c22"><Ic n="bl1" :s="18" /><Ic n="bl2" :s="18" /><Ic n="bl3" :s="18" /></div>
          <div class="big c51">
            <div class="morebox"><Ic n="more1" :s="18" /></div><span>更多</span><i class="car"></i>
          </div>
        </div>
        <div class="gfoot"><span>特征</span><i class="car"></i></div>
      </section>

      <section class="group g3">
        <div class="gbody flexrow">
          <div class="big c52"><Ic n="move" :s="32" /><span>移动面</span><i class="car"></i></div>
          <div class="col3 c22"><Ic n="syn1" :s="18" /><Ic n="syn2" :s="18" /><Ic n="syn3" :s="18" /></div>
          <div class="big c50">
            <div class="morebox"><Ic n="sync" :s="20" /></div><span>更多</span><i class="car"></i>
          </div>
        </div>
        <div class="gfoot"><span>同步建模</span><i class="car"></i></div>
      </section>

      <section v-for="g in rowGroups" :key="g.label" class="group" :style="{ width: g.w + 'px' }">
        <div class="gbody rows2">
          <div v-for="(r, ri) in g.rows" :key="ri" class="grow">
            <span v-for="(it, n) in r" :key="n" class="slot" :style="{ marginLeft: it.ml + 'px', width: it.w + 'px' }">
              <i v-if="it.sep" class="vsep"></i>
              <Ic v-else :n="it.i" :s="it.w" />
            </span>
          </div>
        </div>
        <div class="gfoot"><span>{{ g.label }}</span><i class="car"></i></div>
      </section>

      <section class="group g11">
        <div class="gbody flexrow">
          <div class="big c44"><Ic n="surf" :s="32" /><span>曲面</span><i class="car"></i></div>
        </div>
        <div class="gfoot"></div>
      </section>

      <section class="group g12">
        <div class="gbody flexrow">
          <div class="rows2 c46c"><div class="grow cen"><Ic n="gasm" :s="22" /></div><div class="grow cen"><Ic n="aadd" :s="22" /></div></div>
          <div class="caretcol"><i class="car"></i></div>
          <div class="col3 c24"><Ic n="amir" :s="18" /><Ic n="amov" :s="18" /><Ic n="achain" :s="18" /></div>
        </div>
        <div class="gfoot"><span>装配</span><i class="car"></i></div>
      </section>

      <section class="group g13">
        <div class="gbody"></div>
        <div class="gfoot"><span></span><i class="car"></i></div>
      </section>
    </div>

    <!-- selection toolbar -->
    <div class="toolbar">
      <span v-for="(it, n) in toolItems" :key="n" class="slot" :class="[it.cls, { sel: it.on }]" :style="{ marginLeft: it.ml + 'px', width: it.w + 'px' }">
        <i v-if="it.car" class="car"></i>
        <i v-else-if="it.sep" class="vsep tall"></i>
        <template v-else-if="it.t">{{ it.t }}</template>
        <span v-else-if="it.combo" class="combo"><span>{{ it.combo }}</span><i class="car"></i></span>
        <Ic v-else :n="it.i" :s="it.w > 20 ? 20 : it.w" />
      </span>
    </div>

    <!-- main -->
    <main class="main">
      <div class="edgecol">
        <div class="edgegray"></div>
        <i class="car edgecar"></i>
      </div>
      <aside class="rail">
        <div v-for="r in railItems" :key="r.n" class="railitem" :class="{ active: r.n === 'pnav' }" :style="{ marginTop: r.mt + 'px' }">
          <Ic :n="r.n" :s="r.s" />
        </div>
        <svg class="wave" viewBox="0 0 28 6" width="28" height="6"><path d="M0 3c4 3 9 3 14 1s9-2 14 0" fill="none" stroke="#666" /></svg>
        <div class="railarrows"><i class="car up off line"></i><i class="car up off"></i><i class="car"></i><i class="carlines"></i></div>
      </aside>

      <section class="panel">
        <div class="paneltitle"><span>部件导航器</span><i class="maxbox"></i></div>
        <div class="table">
          <div class="thead">
            <div class="th1"><span>名称</span><i class="car up big"></i></div>
            <div class="th2"><span>最</span></div>
          </div>
          <div class="tbody">
            <i class="treev v0"></i><i class="treev v1"></i>
            <div v-for="(r, n) in tree" :key="n" class="row" :class="{ alt: n % 2 === 1 }">
              <div class="namecell" :class="{ dim: r.dim, bold: r.bold }">
                <template v-if="r.lv === 0">
                  <span v-if="r.exp" class="exp">{{ r.exp }}</span><span v-else class="hdot"></span>
                  <Ic v-if="r.ok" n="ok" :s="14" class="okm" />
                  <Ic :n="r.i" :s="r.ok ? 16 : 18" :class="{ camm: r.ok }" />
                  <span class="lbl">{{ r.t }}</span>
                </template>
                <template v-else-if="r.lv === 1">
                  <span class="hdot l1"></span>
                  <Ic n="okbox" :s="13" />
                  <Ic :n="r.i" :s="16" class="hi" />
                  <span class="lbl l1t">{{ r.t }}</span>
                </template>
              </div>
              <div class="statecell"><Ic v-if="r.lv === 1" n="ok" :s="12" /></div>
            </div>
          </div>
          <div class="hscroll">
            <svg viewBox="0 0 8 10" width="8" height="10"><path d="M6 1L2 5l4 4" fill="none" stroke="#444" stroke-width="1.8" /></svg>
            <div class="track"><i></i></div>
            <svg viewBox="0 0 8 10" width="8" height="10"><path d="M2 1l4 4-4 4" fill="none" stroke="#444" stroke-width="1.8" /></svg>
          </div>
        </div>
        <div class="splitter"></div>
        <div v-for="s in sections" :key="s" class="accordion">
          <span>{{ s }}</span>
          <svg viewBox="0 0 12 8" width="12" height="8"><path d="M1 1l5 6 5-6" fill="none" stroke="#00688c" stroke-width="2.2" /></svg>
        </div>
      </section>

      <section class="viewport">
        <div class="docstrip">
          <div class="doctab">
            <svg viewBox="0 0 14 14" width="14" height="14"><path d="M2 3l4-2 1 6 6-1v5l-7 2-3-2z" fill="#2a5fe0" stroke="#0d2e90" stroke-width=".5" /></svg>
            <span>按钮.prt</span>
            <svg viewBox="0 0 12 12" width="11" height="11"><path d="M2 1h6l2 2v8H2z" fill="none" stroke="#fff" stroke-width="1.2" /><path d="M5 8l5-5" stroke="#fff" stroke-width="1.4" /></svg>
            <svg class="x" viewBox="0 0 10 10" width="9" height="9"><path d="M1 1l8 8M9 1l-8 8" stroke="#fff" stroke-width="2" /></svg>
          </div>
        </div>
        <div class="canvas">
          <svg class="model" viewBox="274 202 1100 504" width="1100" height="504">
            <defs>
              <linearGradient id="gTop" gradientUnits="userSpaceOnUse" x1="120" y1="60" x2="1450" y2="1220">
                <stop offset="0" stop-color="#ffa400" /><stop offset=".2" stop-color="#ffc000" /><stop offset=".45" stop-color="#ffcf05" />
                <stop offset=".65" stop-color="#ffb400" /><stop offset=".85" stop-color="#ff9a00" /><stop offset="1" stop-color="#bf7400" />
              </linearGradient>
              <radialGradient id="gHi" gradientUnits="userSpaceOnUse" cx="0" cy="0" r="1" gradientTransform="translate(920 520) rotate(38) scale(300 100)">
                <stop offset="0" stop-color="#fff636" /><stop offset="1" stop-color="#ffd000" stop-opacity="0" />
              </radialGradient>
              <linearGradient id="gS1" gradientUnits="userSpaceOnUse" x1="200" y1="320" x2="520" y2="560">
                <stop offset="0" stop-color="#ff9f00" /><stop offset=".5" stop-color="#ffd320" /><stop offset="1" stop-color="#ffb410" />
              </linearGradient>
              <linearGradient id="gS2" gradientUnits="userSpaceOnUse" x1="440" y1="480" x2="900" y2="840">
                <stop offset="0" stop-color="#ff9c00" /><stop offset=".28" stop-color="#ffd320" /><stop offset=".7" stop-color="#ffa000" /><stop offset="1" stop-color="#b87000" />
              </linearGradient>
              <linearGradient id="gS3" gradientUnits="userSpaceOnUse" x1="830" y1="790" x2="1170" y2="1100">
                <stop offset="0" stop-color="#ffdc1a" /><stop offset=".55" stop-color="#ffa000" /><stop offset="1" stop-color="#b87000" />
              </linearGradient>
              <linearGradient id="gH" gradientUnits="userSpaceOnUse" x1="320" y1="640" x2="890" y2="1100">
                <stop offset="0" stop-color="#b87000" /><stop offset=".3" stop-color="#ff9e00" /><stop offset=".72" stop-color="#ffd320" /><stop offset="1" stop-color="#ff9a00" />
              </linearGradient>
            </defs>
            <g transform="translate(460 270) scale(.33333)" stroke-linejoin="round">
              <path d="M50 160C70 100 170 33 280 33C450 40 700 170 900 320C1150 510 1380 800 1450 1010C1490 1120 1460 1240 1375 1305L1280 1305L300 400Z" fill="url(#gTop)" stroke="#555c66" stroke-width="1.5" />
              <path d="M50 160C70 100 170 33 280 33C450 40 700 170 900 320C1150 510 1380 800 1450 1010C1490 1120 1460 1240 1375 1305L1280 1305L300 400Z" fill="url(#gHi)" />
              <path d="M80 130C90 122 105 118 125 122C330 160 610 340 800 490C1040 680 1290 950 1385 1170C1400 1220 1400 1280 1375 1305L1280 1305C1210 1285 1150 1260 1105 1235L600 800L155 415C100 330 40 240 47 185C50 160 60 140 80 130Z" fill="#704200" stroke="#3a3a44" stroke-width="1.5" />
              <path d="M75 127C90 110 120 108 150 113C360 155 650 340 830 480C1070 670 1310 950 1400 1180C1415 1230 1410 1275 1395 1295" fill="none" stroke="#3a3a48" stroke-width="2" />
              <path d="M150 515L165 508L195 545L135 540Z" fill="#f09a00" />
              <path d="M1150 1080L1178 1135C1175 1145 1130 1195 1060 1297L1000 1190Z" fill="#ef9500" stroke="#3a3a44" stroke-width="1.5" />
              <path d="M155 415L262 293C275 280 300 283 320 290C400 330 470 380 530 440L410 580C340 500 240 430 145 425Z" fill="url(#gS1)" stroke="#8a6a20" stroke-width="1" />
              <path d="M410 580L520 445C535 432 565 438 590 447C730 520 870 640 925 752L805 890C750 780 620 650 500 600Z" fill="url(#gS2)" stroke="#6a5a30" stroke-width="1" />
              <path d="M925 755L805 890L1062 1170L1185 1030C1150 930 1030 830 925 755Z" fill="url(#gS3)" stroke="#4a4a48" stroke-width="1.5" />
              <path d="M140 430C190 420 340 500 410 580C540 610 720 760 805 890C900 940 1040 1070 1062 1170C1060 1190 1040 1195 1000 1190L990 1175C1010 1200 1050 1260 1055 1295C1030 1310 900 1230 790 1145C770 1150 740 1145 700 1125C590 1060 450 950 395 825C300 770 150 640 135 545C140 535 170 535 205 550C190 510 145 470 140 430Z" fill="#704200" stroke="#3a3a44" stroke-width="1.5" />
              <path d="M300 625C310 590 370 600 440 640C620 760 800 920 880 1060C900 1090 902 1105 895 1115C880 1135 840 1125 780 1095C600 1000 300 720 300 625Z" fill="url(#gH)" stroke="#3a3a48" stroke-width="2" />
              <path d="M440 640C600 740 760 860 845 990C700 900 540 770 440 640Z" fill="#704200" stroke="#3a3a48" stroke-width="2" />
            </g>
            <g transform="translate(0 500) scale(.33333)">
              <path d="M950 472L1005 415L1060 472L1005 515Z" fill="#cfcfcf" stroke="#bdbdbd" />
              <path d="M955 470L1012 412" stroke="#2a64e8" stroke-width="6" fill="none" />
              <path d="M1005 400L1025 410L1010 425Z" fill="#2a64e8" />
              <path d="M960 480L1030 545" stroke="#3f9a3f" stroke-width="5" fill="none" />
              <path d="M960 470L1000 480" stroke="#b02020" stroke-width="8" fill="none" />
              <circle cx="957" cy="470" r="11" fill="#eee" stroke="#888" stroke-width="2" />
              <text x="1027" y="404" font-size="30" fill="#2a64e8" text-anchor="middle" font-family="Liberation Sans, sans-serif">Z</text>
              <text x="1005" y="495" font-size="30" fill="#d83030" text-anchor="middle" font-family="Liberation Sans, sans-serif">X</text>
              <text x="1030" y="554" font-size="30" fill="#3f9a3f" text-anchor="middle" font-family="Liberation Sans, sans-serif">Y</text>
            </g>
          </svg>
        </div>
      </section>
    </main>

    <footer class="status">
      <span class="stcheck"><svg viewBox="0 0 8 10" width="8" height="10"><path d="M0 6l2 2 3-6" fill="none" stroke="#2a70c8" stroke-width="1.6" /></svg></span>
      <span class="sttext">{{ statusText }}</span>
      <div class="stright"><Ic n="flag" :s="16" /><Ic n="fullscr" :s="16" /></div>
    </footer>
    <div class="taskbar"><span>13:44</span></div>

    <!-- decorations lying over the left margin and the lower right corner -->
    <div class="edgemark"><i class="car up"></i></div>
    <div class="watermark">
      <svg viewBox="1088 640 80 86" width="80" height="86">
        <polygon points="1127,642 1163,663 1127,681 1092,663" fill="#cbe6f5" />
        <polygon points="1141,650 1163,663 1163,702 1140,690 1143,670" fill="#85cff0" />
        <polygon points="1163,680 1163,702 1127,723 1108,700 1140,702" fill="#72c1e8" />
        <polygon points="1108,692 1148,708 1127,723 1108,712" fill="#84d3fb" />
        <polygon points="1092,680 1110,668 1110,710 1092,702" fill="#9fd5f2" />
        <polygon points="1092,663 1120,648 1128,655 1108,670 1092,690" fill="#aadcf4" />
        <polygon points="1128,660 1147,671 1147,693 1128,704 1109,693 1109,671" fill="none" stroke="#dbe7ee" stroke-width="3" />
        <polygon points="1128,666 1143,674 1128,682 1113,674" fill="#c4e6f6" />
        <polygon points="1113,674 1128,682 1128,699 1113,691" fill="#9ed6f2" />
        <polygon points="1143,674 1128,682 1128,699 1143,691" fill="#73c2ea" />
      </svg>
      <div class="wmtext">
        <div class="wm1">3D世界网</div>
        <div class="wm2">WWW.3DSJW.COM</div>
      </div>
    </div>
  </div>
</template>

<style>
html, body { margin: 0; padding: 0; background: #fff; overflow: hidden; }
</style>

<style scoped>
* { box-sizing: border-box; }
.app {
  position: relative; width: 1374px; height: 736px; overflow: hidden; background: #fff; color: #1c1c1c;
  font-family: "Noto Sans CJK SC", "Noto Sans", sans-serif; font-size: 11px;
}
.ic { display: block; flex: none; overflow: visible; }
i { display: block; font-style: normal; flex: none; }

/* carets */
.car { width: 0; height: 0; border-left: 3.5px solid transparent; border-right: 3.5px solid transparent; border-top: 4px solid #111; }
.car.up { border-top: 0; border-bottom: 4px solid #111; }
.car.off { border-bottom-color: #c4c4c4; }
.car.big { border-left-width: 5px; border-right-width: 5px; border-bottom-width: 5px; }
.car.line { border-bottom-color: #c4c4c4; position: relative; }
.car.line::after { content: ""; position: absolute; left: -4px; top: 6px; width: 8px; height: 1px; background: #c4c4c4; }
.carlines { width: 7px; height: 7px; border-top: 1px solid #111; position: relative; }
.carlines::after { content: ""; position: absolute; left: 0; top: 2px; border-left: 3.5px solid transparent; border-right: 3.5px solid transparent; border-top: 4px solid #111; }
.vsep { width: 1px; height: 18px; background: #d6d6d6; }
.vsep.tall { height: 26px; }

.slot { display: flex; flex: none; align-items: center; justify-content: center; white-space: nowrap; }

/* title */
.titlebar { height: 26px; display: flex; align-items: center; }
.nx { width: 44px; padding-left: 12px; font: bold 23px/26px "Liberation Sans", sans-serif; color: #8ea3b3; flex: none; }
.qt { font-size: 11px; }
.apptitle { font-size: 13px; font-family: "Noto Sans", "Noto Sans CJK SC", sans-serif; }
.siemens { font: bold 12px "Liberation Sans", sans-serif; letter-spacing: 1.1px; color: #009a9a; padding-top: 2px; }
.wbtn { position: relative; }
.wbtn.min { width: 9px; height: 2px; background: #222; margin-top: 7px; }
.wbtn.res { width: 9px; height: 9px; border: 1.5px solid #222; margin-top: 2px; margin-right: 2px; background: #fff; z-index: 1; }
.wbtn.res::before { content: ""; position: absolute; left: 2px; top: -4.5px; width: 9px; height: 7px; border: 1.5px solid #222; border-bottom: 0; background: #fff; z-index: -1; }
.wbtn.close { width: 12px; height: 12px; background:
  linear-gradient(45deg, transparent 45%, #222 45%, #222 55%, transparent 55%),
  linear-gradient(-45deg, transparent 45%, #222 45%, #222 55%, transparent 55%); }

/* tabs */
.tabbar { margin-left: 8px; height: 28px; background: #dadada; display: flex; align-items: stretch; font-size: 13px; }
.filetab { width: 81px; margin-right: 2px; background: #539fb9; color: #fff; display: flex; align-items: center; justify-content: center; }
.tab { width: 52px; display: flex; align-items: center; justify-content: center; color: #222; }
.tab.wide { width: 78px; }
.tab.on { background: #fff; color: #00789c; }
.tabright { margin-left: auto; display: flex; align-items: center; }
.search { width: 125px; height: 21px; margin-right: 11px; background: #fff; border: 1px solid #9a9a9a; display: flex; align-items: center; justify-content: space-between; padding: 0 1px 0 2px; color: #aaa; font-size: 11px; }
.chev { margin: 0 11px 0 10px; }
.tabright > .ic:last-child { margin-right: 9px; }

/* ribbon */
.ribbon { height: 93px; margin-left: 8px; display: flex; align-items: flex-start; padding-top: 5px; border-bottom: 1px solid #dcdcdc; }
.group { height: 84px; border-right: 1px solid #dedede; flex: none; display: flex; flex-direction: column; }
.g1 { width: 111px; } .g2 { width: 283px; } .g3 { width: 124px; }
.g11 { width: 44px; } .g12 { width: 83px; } .g13 { width: 41px; border-right: 0; }
.gbody { height: 70px; flex: none; }
.flexrow { display: flex; align-items: flex-start; }
.gfoot { height: 14px; display: flex; align-items: center; padding-right: 7px; color: #00789c; font-size: 11px; }
.gfoot span { flex: 1; text-align: center; white-space: nowrap; overflow: hidden; line-height: 14px; margin-top: 2px; letter-spacing: .2px; }
.rows2 { padding-top: 1px; }
.grow { height: 30px; display: flex; align-items: center; }
.grow.cen { justify-content: center; }

.big { display: flex; flex-direction: column; align-items: center; padding-top: 1px; flex: none; }
.big > span { margin-top: 6px; line-height: 14px; white-space: nowrap; }
.big > .car { margin-top: 6px; }
.big > .ic { height: 30px; }
.c58 { width: 57px; } .c46 { width: 46px; } .c51 { width: 51px; } .c52 { width: 52px; } .c50 { width: 50px; } .c44 { width: 44px; }
.c88 { width: 88px; padding-left: 12px; } .c70 { width: 76px; padding-left: 8px; } .c22 { width: 22px; } .c24 { width: 22px; }
.c46c { width: 43px; flex: none; }
.col3 { display: flex; flex-direction: column; margin-top: -4px; height: 66px; align-items: center; justify-content: space-between; padding-top: 2px; padding-bottom: 2px; flex: none; }
.c88.col3, .c70.col3 { align-items: flex-start; }
.cmd { height: 18px; display: flex; align-items: center; white-space: nowrap; gap: 3px; }
.c70 .cmd { gap: 4px; }
.car.ml { margin-left: 7px; } .car.ml2 { margin-left: 5px; }
.curvebox { width: 33px; height: 67px; flex: none; border: 1px solid #dcdcdc; display: flex; flex-direction: column; align-items: center; justify-content: space-between; padding: 2px 0; }
.scroller { width: 20px; height: 60px; flex: none; display: flex; flex-direction: column; align-items: center; justify-content: space-between; margin-left: 1px; padding-top: 8px; }
.morebox { width: 38px; height: 35px; border: 1px solid #dcdcdc; border-radius: 4px; display: flex; align-items: center; justify-content: center; margin-top: -2px; }
.big .morebox + span { margin-top: 3px; }
.caretcol { width: 12px; height: 59px; flex: none; display: flex; align-items: flex-end; justify-content: center; padding-bottom: 5px; }

/* toolbar */
.toolbar { height: 31px; padding-top: 3px; display: flex; align-items: center; border-bottom: 2px solid #a8a8a8; }
.menut { font-size: 11px; }
.combo { width: 100%; height: 20px; border: 1px solid #8a8a8a; display: flex; align-items: center; justify-content: space-between; padding: 0 7px 0 3px; font-size: 11px; background: #fff; }
.sel { height: 23px; background: #c8e4ec; border: 1px solid #a8d4e0; }

/* main */
.main { height: 528px; display: flex; }
.edgecol { width: 8px; background: #f2f2f2; flex: none; padding-right: 2px; display: flex; flex-direction: column; align-items: flex-start; }
.edgegray { width: 6px; height: 11px; background: #bdbdbd; }
.edgecar { margin-top: auto; margin-bottom: 12px; margin-left: -1px; }
.edgemark { position: absolute; left: 0; top: 120px; width: 8px; height: 58px; background: linear-gradient(#f4f4f4 0 32px, #bdbdbd 32px); padding-top: 14px; }
.rail { width: 33px; flex: none; background: #d8d8d8; border-right: 1px solid #a8a8a8; display: flex; flex-direction: column; align-items: center; padding-top: 1px; }
.railitem { display: flex; justify-content: center; width: 100%; }
.railitem.active { position: relative; z-index: 1; background: #fff; margin-left: 3px; width: 30px; }
.railitem.active::before { content: ""; position: absolute; left: -1px; right: -1px; top: -11px; bottom: -11px; background: #fff; border: 1px solid #a8a8a8; border-right: 0; z-index: -1; }
.wave { margin-top: 8px; }
.railarrows { height: 56px; margin-top: 8px; display: flex; flex-direction: column; align-items: center; justify-content: space-between; }

.panel { width: 233px; flex: none; border-right: 2px solid #a8a8a8; padding-left: 6px; padding-right: 9px; }
.paneltitle { height: 30px; display: flex; align-items: center; justify-content: space-between; padding: 0 6px 0 4px; font-size: 12px; color: #222; }
.maxbox { width: 12px; height: 11px; border: 1px solid #111; border-top-width: 2px; }
.table { border: 1px solid #dcdcdc; height: 414px; display: flex; flex-direction: column; }
.thead { height: 21px; display: flex; border-bottom: 1px solid #e4e4e4; font-size: 12px; flex: none; }
.th1 { width: 201px; display: flex; align-items: center; gap: 14px; padding: 1px 0 0 7px; border-right: 1px solid #dcdcdc; }
.th2 { width: 15px; padding-left: 6px; overflow: hidden; line-height: 22px; white-space: nowrap; }
.tbody { position: relative; flex: 1; overflow: hidden; }
.row { height: 20px; display: flex; border-bottom: 1px solid #efefef; background: #fff; }
.row.alt { background: #f9f9f9; }
.namecell { width: 201px; display: flex; align-items: center; border-right: 1px solid #e8e8e8; font-size: 12px; color: #1e1e1e; white-space: nowrap; position: relative; z-index: 1; }
.namecell.dim { color: #a6a6a6; }
.namecell.bold { font-weight: 700; }
.statecell { flex: 1; padding-left: 6px; display: flex; align-items: center; }
.exp { width: 9px; height: 9px; margin-left: 6px; margin-right: 2px; border: 1px solid #c8c8c8; background: #fff; font: 9px/7px "Liberation Sans", sans-serif; text-align: center; color: #111; }
.hdot { width: 9px; margin-right: 2px; margin-left: 6px; border-top: 1px dotted #999; height: 0; }
.hdot.l1 { margin-left: 30px; width: 10px; margin-right: 0; }
.okm { margin-left: 3px; }
.camm { margin-left: 1px; }
.lbl { margin-left: 3px; }
.hi { margin-left: 1px; }
.l1t { margin-left: 3px; }
.treev { position: absolute; border-left: 1px dotted #999; width: 0; }
.v0 { left: 10px; top: 12px; height: 84px; }
.v1 { left: 29px; top: 96px; height: 157px; }
.hscroll { height: 17px; flex: none; background: #f0f0f0; display: flex; align-items: center; margin: 0 1px; padding: 0 1px 0 4px; gap: 4px; }
.track { flex: 1; height: 15px; margin-right: 1px; }
.track i { width: 96px; height: 15px; background: #c8c8c8; }
.splitter { height: 5px; margin-top: 1px; background: #e8e8e8; border: 1px solid #a8a8a8; }
.accordion { height: 24px; display: flex; align-items: center; justify-content: space-between; padding: 2px 8px 0 7px; border-bottom: 2px solid #d4d4d4; font-size: 14px; color: #00789c; }

.viewport { flex: 1; display: flex; flex-direction: column; }
.docstrip { height: 23px; flex: none; border-bottom: 2px solid #539fb9; }
.doctab { width: 109px; height: 21px; background: #539fb9; display: flex; align-items: center; padding-left: 7px; color: #fff; font-size: 12px; }
.doctab span { margin: 0 5px; white-space: nowrap; }
.doctab .x { margin-left: 7px; }
.canvas { flex: 1; background: linear-gradient(#b0b1b3, #e5e6e8 84%, #e6e7e9); overflow: hidden; }
.model { display: block; }

.status { height: 22px; display: flex; align-items: center; border-top: 1px solid #a8a8a8; background: #fff; }
.stcheck { width: 8px; flex: none; display: flex; }
.sttext { margin-left: 3px; font-size: 11px; color: #111; font-weight: 500; white-space: nowrap; letter-spacing: .08px; }
.stright { margin-left: auto; margin-right: 55px; display: flex; gap: 4px; }
.taskbar { height: 8px; background: #000; color: #fff; overflow: hidden; position: relative; font: 12px/12px "Liberation Sans", sans-serif; text-align: right; padding: 3px 24px 0 0; }

.watermark { position: absolute; left: 1088px; top: 640px; display: flex; pointer-events: none; }
.wmtext { margin-left: 4px; margin-top: 7px; color: #f1f2f3; }
.wm1 { font: bold 40px/46px "Liberation Sans", "Noto Sans CJK SC", sans-serif; white-space: nowrap; }
.wm2 { margin-top: 4px; font: 14px/14px "Liberation Sans", sans-serif; letter-spacing: 4px; white-space: nowrap; }
</style>
